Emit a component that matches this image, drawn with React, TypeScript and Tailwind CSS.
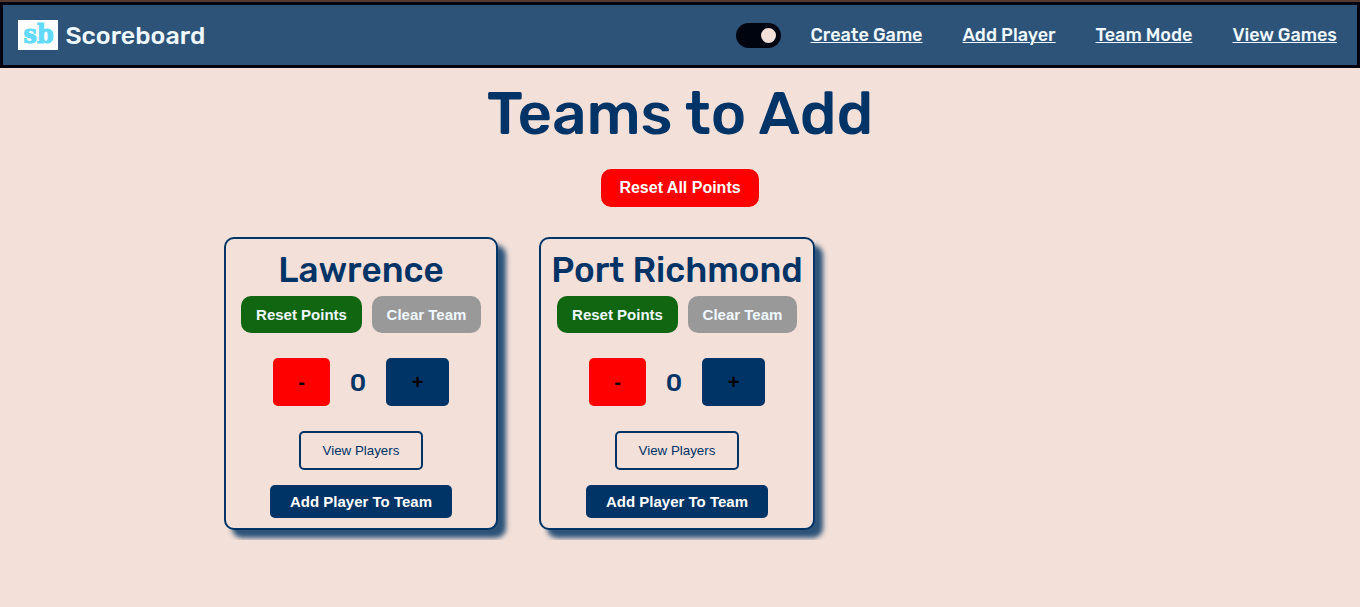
import { useState } from "react";

const links = [
  { label: "Create Game", width: "w-[112px]" },
  { label: "Add Player", width: "w-[93px]" },
  { label: "Team Mode", width: "w-[97px]" },
  { label: "View Games", width: "w-[104px]" },
];

function Header() {
  return (
    <header className="flex h-[66px] items-center justify-between border-[3px] border-[#00040f] bg-[#2d5379] pr-[20.5px] pl-[15px] font-['Rubik','Roboto',sans-serif] font-medium text-[#f0f8ff]">
      <div className="flex items-center gap-[7.5px]">
        <svg viewBox="0 0 40 30" className="h-[30px] w-10 overflow-visible bg-white" role="img" aria-label="sb">
          <text x="5.5" y="23.3" textLength="30" lengthAdjust="spacingAndGlyphs" className="fill-[#61dafb] stroke-[#61dafb] stroke-[1.1px] font-['DejaVu_Serif',serif] text-[25.5px] font-bold">sb</text>
        </svg>
        <span className="pt-px text-[25px] leading-[30px] whitespace-nowrap">Scoreboard</span>
      </div>
      <nav className="flex items-center">
        <button aria-label="Theme" className="mr-[29.5px] flex h-[25px] w-[45px] items-center justify-end rounded-full bg-[#00040f] px-[5px]">
          <span className="size-[15px] rounded-full bg-[#f2e0d9]" />
        </button>
        <div className="flex gap-10">
          {links.map((l) => (
            <a key={l.label} href="#" className={`${l.width} text-[18px] leading-[22px] whitespace-nowrap underline decoration-1 underline-offset-1`}>
              {l.label}
            </a>
          ))}
        </div>
      </nav>
    </header>
  );
}

function TeamCard({ name, width }: { name: string; width: string }) {
  const [points, setPoints] = useState(0);
  return (
    <article className={`${width} flex h-[293px] flex-col items-center rounded-[10px] border-2 border-[#003366] bg-[#f2e0d9] shadow-[8px_8px_5px_#2d5379]`}>
      <h2 className="mt-[10px] font-['Rubik','Roboto',sans-serif] text-[35px] leading-[42px] font-medium whitespace-nowrap">{name}</h2>
      <div className="mt-[5px] flex gap-[10px] text-[15px] font-bold text-[#f0f8ff]">
        <button onClick={() => setPoints(0)} className="h-[37px] w-[121px] rounded-[10px] bg-[#116611] pt-px">Reset Points</button>
        <button className="h-[37px] w-[109px] rounded-[10px] bg-[#999999] pt-px">Clear Team</button>
      </div>
      <div className="mt-[25px] flex items-center text-black">
        <button onClick={() => setPoints(points - 1)} className="h-12 w-[57px] rounded-[5px] bg-[#ff0000] text-[20px] font-bold">-</button>
        <span className="w-14 pt-[2px] text-center font-['Rubik','Roboto',sans-serif] text-[25px] leading-[30px] font-medium text-[#003366]">{points}</span>
        <button onClick={() => setPoints(points + 1)} className="h-12 w-[63px] rounded-[5px] bg-[#003366] text-[20px] font-bold">+</button>
      </div>
      <button className="mt-[25px] h-[39px] w-[124px] rounded-[5px] border-2 border-[#003366] text-[13.333px]">View Players</button>
      <button className="mt-[15px] h-[33px] w-[182px] rounded-[5px] bg-[#003366] pt-px text-[15px] font-bold text-white">Add Player To Team</button>
    </article>
  );
}

export default function App() {
  return (
    <div className="min-h-[607px] bg-[#f2e0d9] font-['Liberation_Sans',sans-serif] text-[#003366]">
      <div className="h-[2px] bg-[#55392f]" />
      <Header />
      <main className="flex flex-col items-center pt-[10px]">
        <h1 className="font-['Rubik','Roboto',sans-serif] text-[60px] leading-[72px] font-medium whitespace-nowrap">Teams to Add</h1>
        <button className="mt-[19px] h-[38px] w-[158px] rounded-[10px] bg-[#ff0000] text-[16px] font-bold text-white">Reset All Points</button>
        <section className="mt-[30px] flex h-[303px] w-full items-start gap-[41px] overflow-hidden pl-[224px]">
          <TeamCard name="Lawrence" width="w-[274px]" />
          <TeamCard name="Port Richmond" width="w-[276px]" />
        </section>
      </main>
    </div>
  );
}
